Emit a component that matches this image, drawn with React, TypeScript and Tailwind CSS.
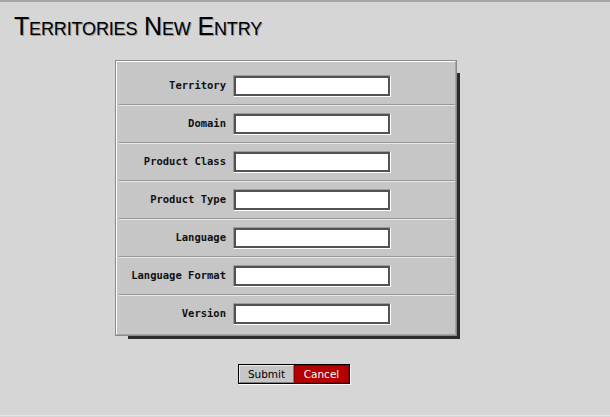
const fields = [
  "Territory",
  "Domain",
  "Product Class",
  "Product Type",
  "Language",
  "Language Format",
  "Version",
];

function Row({ label }: { label: string }) {
  return (
    <div className="flex h-[36px] items-center">
      <label className="w-[107px] text-right font-['DejaVu_Sans_Mono',monospace] text-[10.5px] font-bold text-[#111]">
        {label}
      </label>
      <div className="ml-[7px] border-t border-l border-t-[#9c9c9c] border-l-[#9c9c9c] border-b border-r border-b-white border-r-white">
        <input
          type="text"
          className="block h-[20px] w-[156px] border-2 border-[#525252] bg-white px-1 text-[11px] outline-none"
        />
      </div>
    </div>
  );
}

export default function App() {
  return (
    <div className="flex h-[417px] w-[610px] flex-col overflow-hidden border-t-2 border-[#a6a6a6] bg-[#d6d6d6]">
      {/* Title */}
      <h1 className="ml-[14px] mt-[12px] h-[25px] font-['Liberation_Sans',Arial,sans-serif] text-[25px] leading-[25px] font-normal tracking-[-0.15px] text-black [font-variant:small-caps] [text-shadow:1px_1px_0_#9a9a9a]">
        Territories New Entry
      </h1>

      {/* Form panel */}
      <div className="ml-[115px] mt-[21px] w-[342px] border border-[#8a8a8a] shadow-[8px_8px_0_-5px_#2c2c2c]">
        <div className="border-t border-l border-t-white border-l-white border-r border-b border-r-[#a4a4a4] border-b-[#a4a4a4] bg-[#c6c6c6] pt-[6px] pb-[2px] pl-[2px]">
          {fields.map((f, i) => (
            <div key={f}>
              <Row label={f} />
              {i < fields.length - 1 && (
                <div className="h-0 border-t border-b border-t-[#979797] border-b-[#e6e6e6]" />
              )}
            </div>
          ))}
        </div>
      </div>

      {/* Buttons */}
      <div className="ml-[238px] mt-[28px] flex w-fit border border-black shadow-[1px_1px_0_#ffffff]">
        <button className="h-[18px] w-[55px] border-t border-l border-t-[#ececec] border-l-[#ececec] border-r border-b border-r-[#7c7c7c] border-b-[#7c7c7c] bg-[#c6c6c6] font-['DejaVu_Sans',sans-serif] text-[10.5px] leading-none text-black">
          Submit
        </button>
        <button className="h-[18px] w-[55px] border border-[#8a0000] bg-[#b50000] font-['DejaVu_Sans',sans-serif] text-[10.5px] leading-none text-white">
          Cancel
        </button>
      </div>

      <div className="mt-auto mb-[1px] h-[1px] bg-[#e6e6e6]" />
    </div>
  );
}
